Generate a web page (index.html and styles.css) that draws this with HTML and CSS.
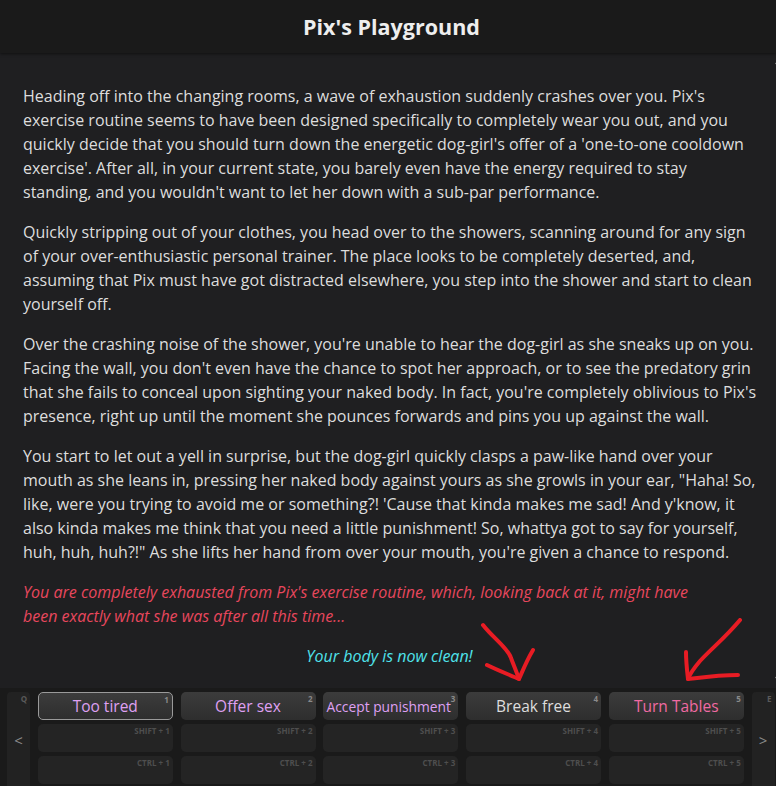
FILE: index.html
```html
<!DOCTYPE html>
<html lang="en">
<head>
    <meta charset="UTF-8">
    <meta name="viewport" content="width=device-width, initial-scale=1.0">
    <title>Pix's Playground</title>
    <link rel="stylesheet" href="styles.css">
</head>
<body>
    <div class="game-window">
        <div class="title-bar">
            <h1>Pix's Playground</h1>
        </div>

        <div class="main-area">
            <div class="story">
                <p>Heading off into the changing rooms, a wave of exhaustion suddenly crashes over you. Pix's<br>exercise routine seems to have been designed specifically to completely wear you out, and you<br>quickly decide that you should turn down the energetic dog-girl's offer of a 'one-to-one cooldown<br>exercise'. After all, in your current state, you barely even have the energy required to stay<br>standing, and you wouldn't want to let her down with a sub-par performance.</p>
                <p>Quickly stripping out of your clothes, you head over to the showers, scanning around for any sign<br>of your over-enthusiastic personal trainer. The place looks to be completely deserted, and,<br>assuming that Pix must have got distracted elsewhere, you step into the shower and start to clean<br>yourself off.</p>
                <p>Over the crashing noise of the shower, you're unable to hear the dog-girl as she sneaks up on you.<br>Facing the wall, you don't even have the chance to spot her approach, or to see the predatory grin<br>that she fails to conceal upon sighting your naked body. In fact, you're completely oblivious to Pix's<br>presence, right up until the moment she pounces forwards and pins you up against the wall.</p>
                <p>You start to let out a yell in surprise, but the dog-girl quickly clasps a paw-like hand over your<br>mouth as she leans in, pressing her naked body against yours as she growls in your ear, "Haha! So,<br>like, were you trying to avoid me or something?! 'Cause that kinda makes me sad! And y'know, it<br>also kinda makes me think that you need a little punishment! So, whattya got to say for yourself,<br>huh, huh, huh?!" As she lifts her hand from over your mouth, you're given a chance to respond.</p>
                <p class="status-bad">You are completely exhausted from Pix's exercise routine, which, looking back at it, might have<br>been exactly what she was after all this time...</p>
                <p class="status-clean">Your body is now clean!</p>
            </div>
            <div class="scrollbar">
                <span class="scroll-arrow up"></span>
                <div class="scroll-thumb"></div>
                <span class="scroll-arrow down"></span>
            </div>

            <!-- пометки поверх скриншота -->
            <svg class="marks" width="776" height="70" viewBox="0 620 776 70">
                <path d="M483 627 C493 640 508 650 511 660 C514 668 517 675 519 681" />
                <path d="M487 667 C497 672 510 677 519 681 C523 672 527 662 533 652" />
                <path d="M740 622 C725 640 712 650 700 663 C694 670 690 676 688 681" />
                <path d="M686 654 C686 664 687 672 688 681 C705 679 720 677 738 677" />
            </svg>
        </div>

        <div class="action-bar">
            <div class="page-btn">
                <span class="key">Q</span>
                <span class="page-arrow">&lt;</span>
            </div>

            <div class="action-col">
                <div class="action selected"><span class="key">1</span><span class="label sex">Too tired</span></div>
                <div class="action empty"><span class="key">SHIFT + 1</span></div>
                <div class="action empty"><span class="key">CTRL + 1</span></div>
            </div>
            <div class="action-col">
                <div class="action"><span class="key">2</span><span class="label sex">Offer sex</span></div>
                <div class="action empty"><span class="key">SHIFT + 2</span></div>
                <div class="action empty"><span class="key">CTRL + 2</span></div>
            </div>
            <div class="action-col">
                <div class="action"><span class="key">3</span><span class="label sex small">Accept punishment</span></div>
                <div class="action empty"><span class="key">SHIFT + 3</span></div>
                <div class="action empty"><span class="key">CTRL + 3</span></div>
            </div>
            <div class="action-col">
                <div class="action"><span class="key">4</span><span class="label">Break free</span></div>
                <div class="action empty"><span class="key">SHIFT + 4</span></div>
                <div class="action empty"><span class="key">CTRL + 4</span></div>
            </div>
            <div class="action-col">
                <div class="action"><span class="key">5</span><span class="label dom">Turn Tables</span></div>
                <div class="action empty"><span class="key">SHIFT + 5</span></div>
                <div class="action empty"><span class="key">CTRL + 5</span></div>
            </div>

            <div class="page-btn">
                <span class="key">E</span>
                <span class="page-arrow">&gt;</span>
            </div>
        </div>
    </div>
</body>
</html>
```

FILE: styles.css
```css
body {
    margin: 0;
    font-family: "Open Sans", "Noto Sans", sans-serif;
    background-color: #1f1f21;
    color: #dddddd;
}

.game-window {
    width: 776px;
    height: 786px;
    display: flex;
    flex-direction: column;
    overflow: hidden;
}

.title-bar {
    flex-shrink: 0;
    height: 53px;
    padding-left: 7px;
    background-color: #1a1a1a;
    box-shadow: 0 1px 3px rgba(0, 0, 0, 0.5);
    display: flex;
    align-items: center;
    justify-content: center;
    position: relative;
    z-index: 1;
}

.title-bar h1 {
    margin: 0;
    font-size: 21.5px;
    font-weight: bold;
    color: #eeeeee;
}

.main-area {
    flex: 1;
    min-height: 0;
    overflow: hidden;
    display: flex;
    position: relative;
    background-color: #1f1f21;
}

.story {
    flex: 1;
    padding: 15px 20px 0 23px;
    font-size: 16px;
    line-height: 24px;
    white-space: nowrap;
}

.story p {
    margin: 16px 0;
}

.status-bad {
    font-style: italic;
    color: #e8475d;
}

.status-clean {
    font-style: italic;
    color: #4fe3ec;
    text-align: center;
}

.scrollbar {
    width: 6px;
    display: flex;
    flex-direction: column;
    align-items: flex-end;
    padding: 8px 0 8px;
}

.scroll-arrow {
    width: 4px;
    height: 4px;
    border-left: 1px solid #888888;
    border-top: 1px solid #888888;
    margin-right: -2px;
}

.scroll-arrow.up {
    transform: rotate(45deg);
}

.scroll-arrow.down {
    transform: rotate(225deg);
}

.scroll-thumb {
    flex: 1;
    width: 3px;
    background-color: #3c3c3e;
    margin: 4px 0;
}

.marks {
    position: absolute;
    left: 0;
    bottom: 0;
    pointer-events: none;
}

.marks path {
    fill: none;
    stroke: #e81c24;
    stroke-width: 4;
    stroke-linecap: round;
    stroke-linejoin: round;
}

.action-bar {
    flex-shrink: 0;
    height: 98px;
    background-color: #1a1a1a;
    display: grid;
    grid-template-columns: 23px repeat(5, 135px) 23px;
    column-gap: 7.75px;
    padding: 4px 0 0 7px;
    box-sizing: border-box;
}

.page-btn {
    background-color: #222222;
    border-radius: 4px 4px 0 0;
    position: relative;
    display: flex;
    align-items: center;
    justify-content: center;
}

.page-arrow {
    color: #8a8a8a;
    font-size: 15px;
    margin-top: 2px;
}

.action-col {
    display: flex;
    flex-direction: column;
    gap: 4px;
}

.action {
    height: 28px;
    flex-shrink: 0;
    box-sizing: border-box;
    border-radius: 5px;
    background: linear-gradient(#3c3c3c, #2e2e2e);
    position: relative;
    display: flex;
    align-items: center;
    justify-content: center;
    font-size: 15.5px;
    color: #dddddd;
    white-space: nowrap;
    cursor: pointer;
}

.action.selected {
    border: 1px solid #9a9a9a;
}

.action.empty {
    background: #242424;
    cursor: default;
}

.key {
    position: absolute;
    top: 2px;
    right: 3px;
    font-size: 8px;
    line-height: 9px;
    font-weight: bold;
    color: #505050;
}

.action .key {
    color: #8a8a8a;
}

.action.empty .key {
    color: #4e4e4e;
}

.page-btn .key {
    color: #5a5a5a;
}

.label.sex {
    color: #dfa0f2;
}

.label.small {
    font-size: 13.8px;
    margin-right: 4px;
}

.label.dom {
    color: #f06aa2;
}
```
